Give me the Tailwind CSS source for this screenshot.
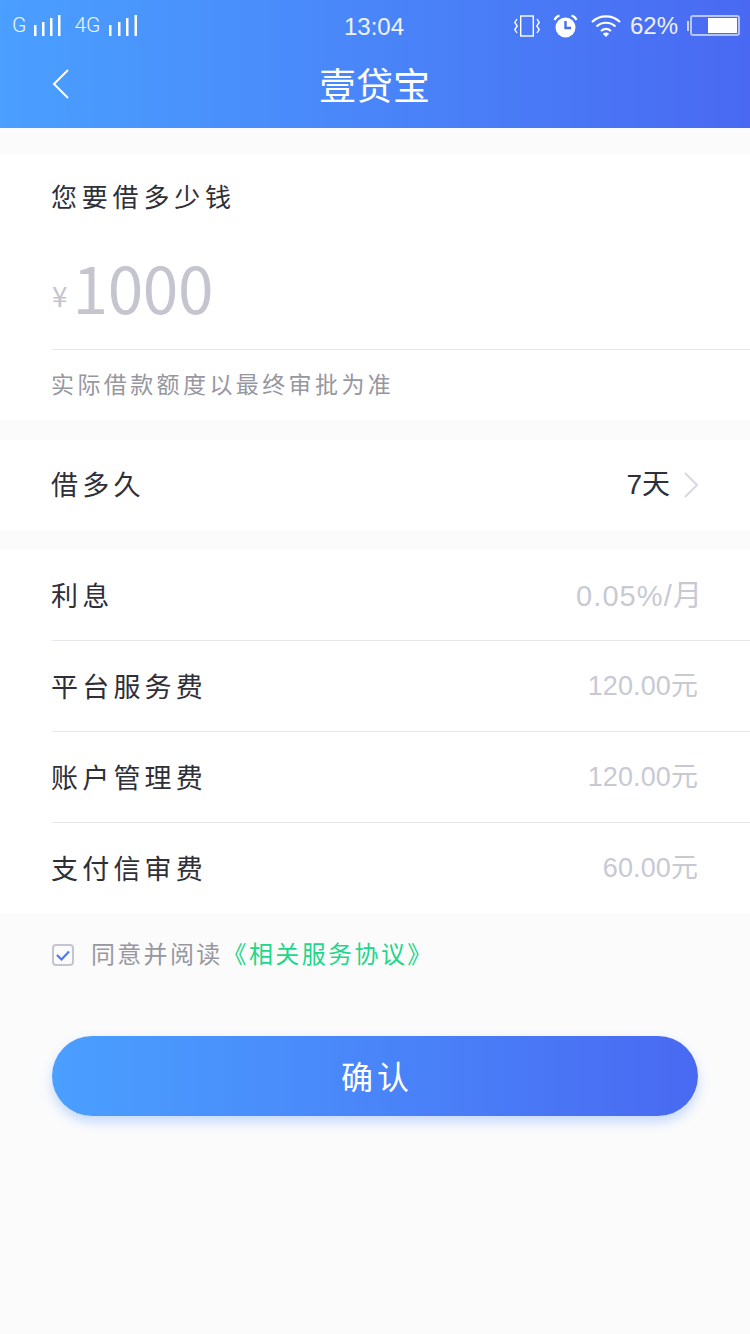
<!DOCTYPE html>
<html lang="zh">
<head>
<meta charset="utf-8">
<title>壹贷宝</title>
<script src="https://cdn.jsdelivr.net/npm/@tailwindcss/browser@4"></script>
</head>
<body class="bg-[#fbfbfc] font-['Liberation_Sans','Noto_Sans_CJK_SC',sans-serif]">
<div class="w-[750px] h-[1334px] flex flex-col bg-[#fbfbfc] overflow-hidden">

  <!-- header -->
  <header class="h-[128px] shrink-0 bg-gradient-to-r from-[#4a9fff] to-[#4969f2] text-white">
    <div class="h-[52px] pl-[12px] pr-[10px] flex items-start justify-between">
      <div class="w-[238px] pt-[13px] flex items-center text-[21px] leading-[24px] font-light font-['Roboto',sans-serif] text-white/90">
        <span>G</span>
        <svg class="ml-[8px]" width="27" height="21" viewBox="0 0 27 21" fill="#fff"><rect x="0" y="10" width="2.5" height="11"/><rect x="8" y="7" width="2.5" height="14"/><rect x="16" y="3" width="2.5" height="18"/><rect x="24" y="0" width="2.5" height="21"/></svg>
        <span class="ml-[13px]">4G</span>
        <svg class="ml-[9px]" width="29" height="21" viewBox="0 0 29 21" fill="#fff"><rect x="0" y="10" width="2.5" height="11"/><rect x="9" y="7" width="2.5" height="14"/><rect x="17" y="3" width="2.5" height="18"/><rect x="25.5" y="0" width="2.5" height="21"/></svg>
      </div>
      <div class="pt-[12px] text-[24px] leading-[29px] text-white/90">13:04</div>
      <div class="w-[242px] pt-[11px] flex items-center justify-end">
        <svg width="27" height="22" viewBox="0 0 27 22" fill="none" stroke="#fff" stroke-width="1.4"><rect x="6.7" y="1" width="12.6" height="20"/><path d="M3 4 L0.8 7.5 L3.2 11 L0.8 14.5 L3 18"/><path d="M23 4 L25.2 7.5 L22.8 11 L25.2 14.5 L23 18"/></svg>
        <svg class="ml-[12px]" width="25" height="24" viewBox="0 0 25 24"><circle cx="12.5" cy="13.5" r="10" fill="#fff"/><path d="M12.5 7 V14 H18" fill="none" stroke="#4a6df3" stroke-width="2.4"/><path d="M1.5 6 Q3 2.5 6.5 1.5 M23.5 6 Q22 2.5 18.5 1.5" stroke="#fff" stroke-width="2.2" fill="none"/></svg>
        <svg class="ml-[13px]" width="30" height="23" viewBox="0 0 30 23" fill="none" stroke="#fff" stroke-width="2.2"><path d="M1 8 C9 0.5 21 0.5 29 8"/><path d="M5.5 12.5 C11 7.5 19 7.5 24.5 12.5"/><path d="M10 17 C13 14.5 17 14.5 20 17"/><path d="M15 23 L11.8 19.7 C13.8 18.2 16.2 18.2 18.2 19.7 Z" fill="#fff" stroke="none"/></svg>
        <span class="ml-[9px] text-[24px] leading-[29px] text-white/90">62%</span>
        <div class="ml-[9px] w-[3px] h-[10px] border-l-2 border-white/70"></div>
        <div class="w-[50px] h-[21px] border-2 border-white/60 rounded-[3px] flex justify-end">
          <div class="w-[29px] bg-white my-[1px] mr-[1px]"></div>
        </div>
      </div>
    </div>
    <div class="h-[76px] pl-[52px] flex items-center relative">
      <svg class="mt-[-12px]" width="17" height="30" viewBox="0 0 17 30" fill="none" stroke="#fff" stroke-width="2"><path d="M16 1 L2 15 L16 29"/></svg>
      <h1 class="absolute left-[-1px] right-0 top-[13px] text-center text-[37px] leading-[46px] font-normal">壹贷宝</h1>
    </div>
  </header>

  <!-- amount -->
  <section class="mt-[26px] h-[266px] shrink-0 bg-white pl-[52px] flex flex-col">
    <div class="-ml-[1px] pt-[25px] text-[26px] leading-[38px] tracking-[4.8px] text-[#2f2f37]">您要借多少钱</div>
    <div class="h-[133px] flex items-center border-b border-[#e5e5ea] pt-[6px] text-[#c5c5cf]">
      <span class="text-[28px] mt-[18px] leading-[34px] font-['Noto_Sans_CJK_SC',sans-serif]">¥</span>
      <span class="ml-[5px] text-[64px] leading-[80px] tracking-[-0.4px] font-['Noto_Sans_CJK_SC',sans-serif]">1000</span>
    </div>
    <div class="-ml-[1px] pt-[19px] text-[23px] leading-[32px] tracking-[3.4px] text-[#97979f]">实际借款额度以最终审批为准</div>
  </section>

  <!-- term -->
  <section class="mt-[20px] h-[90px] shrink-0 bg-white pl-[52px] pr-[52px] flex items-center justify-between">
    <span class="-ml-[1px] pt-[2px] text-[27px] leading-[40px] tracking-[4.2px] text-[#2f2f37]">借多久</span>
    <span class="flex items-center text-[#2f2f37] text-[28px] leading-[40px]">7天
      <svg class="ml-[14px]" width="14" height="26" viewBox="0 0 14 26" fill="none" stroke="#d8d8e2" stroke-width="2"><path d="M1 1 L13 13 L1 25"/></svg>
    </span>
  </section>

  <!-- fees -->
  <section class="mt-[20px] h-[363px] shrink-0 bg-white pl-[52px] flex flex-col">
    <div class="h-[91px] border-b border-[#e5e5ea] pr-[47px] flex items-center justify-between">
      <span class="-ml-[1px] pt-[4px] text-[27px] leading-[40px] tracking-[4.2px] text-[#2f2f37]">利息</span>
      <span class="pt-[1px] text-[29px] leading-[40px] tracking-[1.1px] text-[#c9c9d3]">0.05%/月</span>
    </div>
    <div class="h-[91px] border-b border-[#e5e5ea] pr-[52px] flex items-center justify-between">
      <span class="-ml-[1px] pt-[4px] text-[27px] leading-[40px] tracking-[4.2px] text-[#2f2f37]">平台服务费</span>
      <span class="text-[27px] leading-[40px] tracking-[0.1px] text-[#c9c9d3]">120.00元</span>
    </div>
    <div class="h-[91px] border-b border-[#e5e5ea] pr-[52px] flex items-center justify-between">
      <span class="-ml-[1px] pt-[4px] text-[27px] leading-[40px] tracking-[4.2px] text-[#2f2f37]">账户管理费</span>
      <span class="text-[27px] leading-[40px] tracking-[0.1px] text-[#c9c9d3]">120.00元</span>
    </div>
    <div class="h-[90px] pr-[52px] flex items-center justify-between">
      <span class="-ml-[1px] pt-[4px] text-[27px] leading-[40px] tracking-[4.2px] text-[#2f2f37]">支付信审费</span>
      <span class="text-[27px] leading-[40px] tracking-[0.1px] text-[#c9c9d3]">60.00元</span>
    </div>
  </section>

  <!-- agreement -->
  <div class="mt-[26px] pl-[52px] h-[32px] flex items-center">
    <div class="w-[22px] h-[22px] border-2 border-[#c5c5cf] rounded-[4px] flex items-center justify-center">
      <svg width="14" height="11" viewBox="0 0 14 11" fill="none" stroke="#4a7bf7" stroke-width="2.2"><path d="M1 5 L5.5 9.5 L13 1.5"/></svg>
    </div>
    <span class="ml-[17px] text-[24px] leading-[32px] tracking-[2.3px] text-[#97979f]">同意并阅读</span>
    <span class="text-[24px] leading-[32px] tracking-[2.4px] text-[#1fd68a]">《相关服务协议》</span>
  </div>

  <!-- confirm -->
  <button class="mt-[65px] mx-[52px] h-[80px] shrink-0 rounded-[40px] bg-gradient-to-r from-[#4a9fff] to-[#4969f2] shadow-[0_6px_12px_rgba(74,140,255,0.3)] pl-[4px] pt-[3px] text-white text-[32px] tracking-[4px]">确认</button>
</div>
</body>
</html>
